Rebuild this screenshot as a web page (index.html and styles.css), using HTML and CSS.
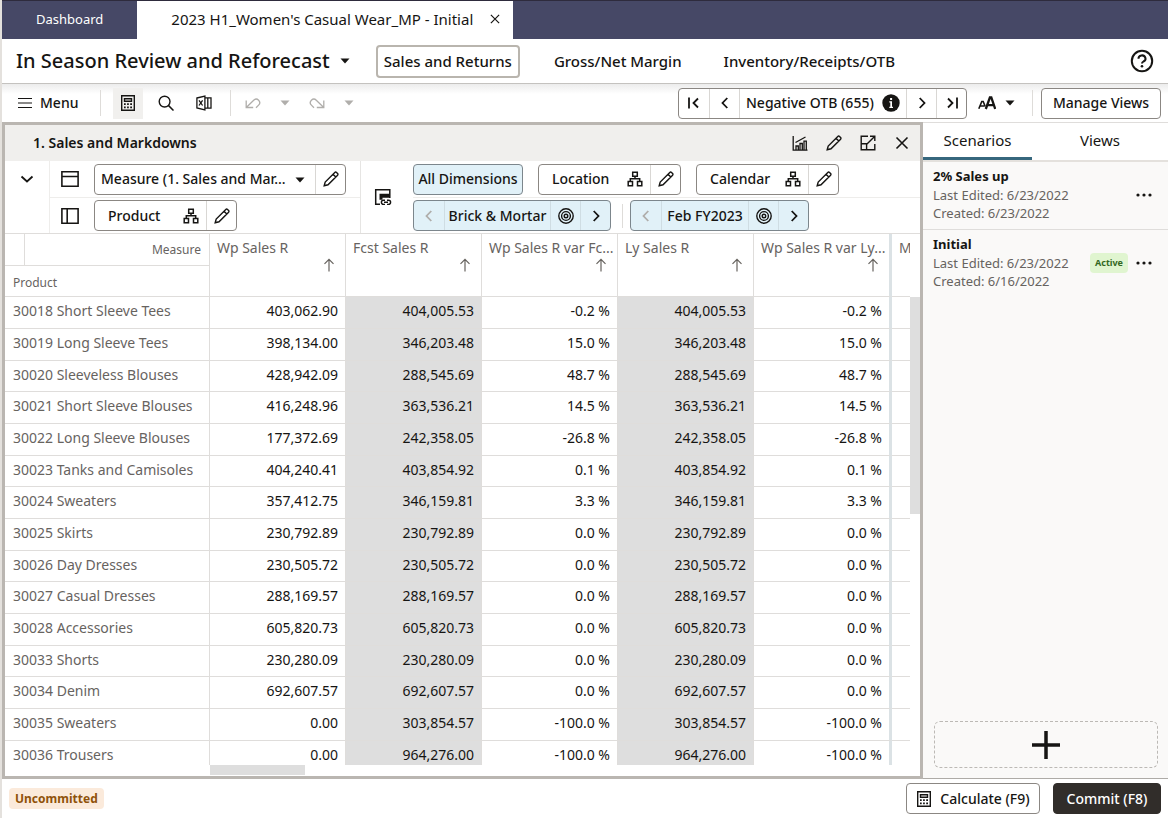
FILE: index.html
```html
<!DOCTYPE html>
<html lang="en">
<head>
<meta charset="utf-8">
<title>In Season Review and Reforecast</title>
<link rel="stylesheet" href="styles.css">
</head>
<body>
<svg class="sprite" aria-hidden="true">
  <symbol id="i-caret" viewBox="0 0 10 6"><path d="M0.5 0.5h9L5 5.5z" fill="currentColor"/></symbol>
  <symbol id="i-menu" viewBox="0 0 16 16"><path d="M1 3.5h14M1 8h14M1 12.5h14" fill="none" stroke="currentColor" stroke-width="1.2"/></symbol>
  <symbol id="i-calc" viewBox="0 0 16 16"><path d="M1.700.8h12.600v14.400H1.700zM4.500 3.700h7v2.600h-7z" fill="none" stroke="currentColor" stroke-width="1.400"/><path d="M4 8.300h1.700V10H4zM7.100 8.300h1.700V10H7.100zM10.200 8.300H12V10h-1.800zM4 11.500h1.700v1.700H4zM7.100 11.500h1.700v1.700H7.100zM10.200 11.500H12v1.700h-1.800z" fill="currentColor"/></symbol>
  <symbol id="i-search" viewBox="0 0 16 16"><circle cx="6.600" cy="6.600" r="5.400" fill="none" stroke="currentColor" stroke-width="1.400"/><path d="M10.600 10.600l4.900 4.900" stroke="currentColor" stroke-width="1.500"/></symbol>
  <symbol id="i-excel" viewBox="0 0 16 16"><path d="M.9 3l8-1.900v13.800L.9 13zM9 2.800h6v10.400H9M11.800 2.800v10.400M3 5.300l3.600 5.200M6.600 5.300L3 10.500" fill="none" stroke="currentColor" stroke-width="1.300"/></symbol>
  <symbol id="i-undo" viewBox="0 0 16 16"><path d="M1.200 5.500v7h7M1.500 12.200l7.200-7a3.400 3.400 0 0 1 4.900 4.900L11 12.800" fill="none" stroke="currentColor" stroke-width="1.300"/></symbol>
  <symbol id="i-redo" viewBox="0 0 16 16"><path d="M14.800 5.500v7h-7M14.500 12.200l-7.200-7a3.400 3.400 0 0 0-4.900 4.900L5 12.800" fill="none" stroke="currentColor" stroke-width="1.300"/></symbol>
  <symbol id="i-first" viewBox="0 0 16 16"><path d="M3 2.500v11M12 3.500L7.500 8l4.500 4.500" fill="none" stroke="currentColor" stroke-width="1.800"/></symbol>
  <symbol id="i-last" viewBox="0 0 16 16"><path d="M13 2.500v11M4 3.500L8.500 8 4 12.500" fill="none" stroke="currentColor" stroke-width="1.800"/></symbol>
  <symbol id="i-prev" viewBox="0 0 16 16"><path d="M10.300 3L5.500 8l4.800 5" fill="none" stroke="currentColor" stroke-width="1.800"/></symbol>
  <symbol id="i-next" viewBox="0 0 16 16"><path d="M5.700 3l4.800 5-4.800 5" fill="none" stroke="currentColor" stroke-width="1.800"/></symbol>
  <symbol id="i-down" viewBox="0 0 16 16"><path d="M2.500 5.500L8 10.500l5.500-5" fill="none" stroke="currentColor" stroke-width="1.800"/></symbol>
  <symbol id="i-info" viewBox="0 0 18 18"><circle cx="9" cy="9" r="8.700" fill="currentColor"/><path d="M8.100 4h2v2h-2zM7.300 7.300h2.700V12.700h1V14H7.300v-1.300h1V8.600h-1z" fill="#fff"/></symbol>
  <symbol id="i-font" viewBox="0 0 18 14"><path d="M7.800 13L11.900 1.500h1.400L17.200 13M9.500 9.200h6.500" fill="none" stroke="currentColor" stroke-width="2.300"/><path d="M.8 12.800L3.800 5.500h1.400l2 5M2.200 10h4" fill="none" stroke="currentColor" stroke-width="1.600"/></symbol>
  <symbol id="i-help" viewBox="0 0 24 24"><circle cx="12" cy="12" r="10.200" fill="none" stroke="currentColor" stroke-width="2"/><path d="M8.500 9.800a3.500 3.200 0 1 1 5 2.700c-1 .6-1.500 1-1.500 2" fill="none" stroke="currentColor" stroke-width="2"/><circle cx="12" cy="17.200" r="1.300" fill="currentColor"/></symbol>
  <symbol id="i-chart" viewBox="0 0 16 16"><path d="M1.200 1v14.200H15.500M4 15v-4h2.300v4M8 15V8.500h2.300V15M12 15V6.200h2.300V15M3.500 7.500L13.500 2" fill="none" stroke="currentColor" stroke-width="1.300"/></symbol>
  <symbol id="i-pencil" viewBox="0 0 16 16"><path d="M1.200 14.800l1-3.800L11.800 1.400a1.200 1.200 0 0 1 1.700 0l1.100 1.100a1.200 1.200 0 0 1 0 1.700L5 13.800zM10 3.200L12.800 6" fill="none" stroke="currentColor" stroke-width="1.400"/></symbol>
  <symbol id="i-expand" viewBox="0 0 16 16"><path d="M8 1.200H1.200v13.600h13.600V9M1.200 8.800h5.400v6M7 9l7.800-7.800M10 1.200h4.800V6" fill="none" stroke="currentColor" stroke-width="1.400"/></symbol>
  <symbol id="i-close" viewBox="0 0 16 16"><path d="M2.500 2.500l11 11M13.500 2.500l-11 11" fill="none" stroke="currentColor" stroke-width="1.600"/></symbol>
  <symbol id="i-rows" viewBox="0 0 16 16"><path d="M.8 1.500h14.400v13H.8zM.8 5.800h14.400" fill="none" stroke="currentColor" stroke-width="1.400"/></symbol>
  <symbol id="i-cols" viewBox="0 0 16 16"><path d="M.8 1.500h14.400v13H.8zM5.500 1.500v13" fill="none" stroke="currentColor" stroke-width="1.400"/></symbol>
  <symbol id="i-tree" viewBox="0 0 16 16"><path d="M5.700 1.200h4.600v4H5.700zM1.200 10.500h4.300v4.300H1.200zM10.500 10.500h4.300v4.300h-4.300zM8 5.200v2.600M3.300 10.500V7.800h9.400v2.700" fill="none" stroke="currentColor" stroke-width="1.500"/></symbol>
  <symbol id="i-link" viewBox="0 0 18 18"><path d="M15.800 10V1.700H1.700v14.600H6" fill="none" stroke="currentColor" stroke-width="1.500"/><path d="M5.500 5.800H16v4H8.500v2h-3z" fill="currentColor"/><path d="M11 12.200H9.500a2.100 2.100 0 0 0 0 4.200H11M13 12.200h1.500a2.100 2.100 0 0 1 0 4.200H13M10 14.300h4" fill="none" stroke="currentColor" stroke-width="1.400"/></symbol>
  <symbol id="i-target" viewBox="0 0 18 18"><g fill="none" stroke="currentColor" stroke-width="1.400"><circle cx="9" cy="9" r="7.200"/><circle cx="9" cy="9" r="4.400"/></g><circle cx="9" cy="9" r="1.800" fill="none" stroke="currentColor" stroke-width="1.400"/></symbol>
  <symbol id="i-up" viewBox="0 0 12 14"><path d="M6 13.500V1.500M1.500 5.800L6 1.300l4.500 4.500" fill="none" stroke="currentColor" stroke-width="1.200"/></symbol>
  <symbol id="i-dots" viewBox="0 0 16 4"><circle cx="2" cy="2" r="1.600" fill="currentColor"/><circle cx="8" cy="2" r="1.600" fill="currentColor"/><circle cx="14" cy="2" r="1.600" fill="currentColor"/></symbol>
  <symbol id="i-plus" viewBox="0 0 28 28"><path d="M14 0v28M0 14h28" stroke="currentColor" stroke-width="3.500"/></symbol>
</svg>
<div class="app">
  <nav class="tabbar" aria-label="Open tabs">
    <button class="doc-tab">Dashboard</button>
    <div class="doc-tab doc-tab-active"><span>2023 H1_Women's Casual Wear_MP - Initial</span><button class="tab-close" aria-label="Close tab"><svg class="ic12"><use href="#i-close"/></svg></button></div>
  </nav>
  <header class="header">
    <h1 class="title">In Season Review and Reforecast</h1>
    <button class="plain title-caret" aria-label="Switch step"><svg class="caret"><use href="#i-caret"/></svg></button>
    <nav class="steps" aria-label="Steps">
      <a class="step step-active" href="#">Sales and Returns</a>
      <a class="step" href="#">Gross/Net Margin</a>
      <a class="step" href="#">Inventory/Receipts/OTB</a>
    </nav>
    <button class="plain push" aria-label="Help"><svg class="ic24"><use href="#i-help"/></svg></button>
  </header>
  <div class="toolbar">
    <button class="plain menu-btn"><svg class="ic16"><use href="#i-menu"/></svg>Menu</button>
    <span class="sep"></span>
    <button class="tool tool-on" aria-label="Calculator"><svg class="ic16"><use href="#i-calc"/></svg></button>
    <button class="tool" aria-label="Search"><svg class="ic16"><use href="#i-search"/></svg></button>
    <button class="tool" aria-label="Export to Excel"><svg class="ic16"><use href="#i-excel"/></svg></button>
    <span class="sep"></span>
    <div class="history">
      <button class="plain" disabled aria-label="Undo"><svg class="ic16"><use href="#i-undo"/></svg></button>
      <button class="plain" disabled aria-label="Undo list"><svg class="caret"><use href="#i-caret"/></svg></button>
      <button class="plain" disabled aria-label="Redo"><svg class="ic16"><use href="#i-redo"/></svg></button>
      <button class="plain" disabled aria-label="Redo list"><svg class="caret"><use href="#i-caret"/></svg></button>
    </div>
    <div class="group pager push">
      <button class="cell" aria-label="First"><svg class="ic16"><use href="#i-first"/></svg></button>
      <button class="cell" aria-label="Previous"><svg class="ic16"><use href="#i-prev"/></svg></button>
      <span class="cell cell-label alert-label">Negative OTB (655)<svg class="ic18"><use href="#i-info"/></svg></span>
      <button class="cell" aria-label="Next"><svg class="ic16"><use href="#i-next"/></svg></button>
      <button class="cell" aria-label="Last"><svg class="ic16"><use href="#i-last"/></svg></button>
    </div>
    <button class="plain font-btn" aria-label="Text size"><svg class="ic-font"><use href="#i-font"/></svg><svg class="caret"><use href="#i-caret"/></svg></button>
    <span class="sep sep-short"></span>
    <button class="btn manage">Manage Views</button>
  </div>
  <main class="main">
    <section class="panel">
      <div class="panel-head">
        <h2 class="panel-title">1. Sales and Markdowns</h2>
        <button class="plain" aria-label="Chart"><svg class="ic16"><use href="#i-chart"/></svg></button>
        <button class="plain" aria-label="Edit"><svg class="ic16"><use href="#i-pencil"/></svg></button>
        <button class="plain" aria-label="Expand"><svg class="ic16"><use href="#i-expand"/></svg></button>
        <button class="plain" aria-label="Close"><svg class="ic16"><use href="#i-close"/></svg></button>
      </div>
      <div class="axes">
        <button class="plain axes-toggle" aria-label="Collapse"><svg class="ic16"><use href="#i-down"/></svg></button>
        <div class="axes-left">
          <div class="axis-row">
            <svg class="ic18 axis-icon"><use href="#i-rows"/></svg>
            <div class="group measure">
              <label class="measure-pick"><select aria-label="Measure profile"><option>Measure (1. Sales and Mar...</option></select><svg class="caret"><use href="#i-caret"/></svg></label>
              <button class="cell" aria-label="Edit measure"><svg class="ic16"><use href="#i-pencil"/></svg></button>
            </div>
          </div>
          <div class="axis-row">
            <svg class="ic18 axis-icon"><use href="#i-cols"/></svg>
            <div class="group dim">
              <button class="dim-name">Product<svg class="ic16"><use href="#i-tree"/></svg></button>
              <button class="cell" aria-label="Edit product"><svg class="ic16"><use href="#i-pencil"/></svg></button>
            </div>
          </div>
        </div>
        <div class="axes-link"><svg class="ic18"><use href="#i-link"/></svg></div>
        <div class="axes-right">
          <div class="axis-row pages">
            <button class="btn all-dims">All Dimensions</button>
            <div class="group dim">
              <button class="dim-name">Location<svg class="ic16"><use href="#i-tree"/></svg></button>
              <button class="cell" aria-label="Edit location"><svg class="ic16"><use href="#i-pencil"/></svg></button>
            </div>
            <div class="group dim">
              <button class="dim-name">Calendar<svg class="ic16"><use href="#i-tree"/></svg></button>
              <button class="cell" aria-label="Edit calendar"><svg class="ic16"><use href="#i-pencil"/></svg></button>
            </div>
          </div>
          <div class="axis-row">
            <div class="group tinted slice-wide">
              <button class="cell" disabled aria-label="Previous location"><svg class="ic16"><use href="#i-prev"/></svg></button>
              <span class="cell cell-label">Brick &amp; Mortar</span>
              <button class="cell" aria-label="Locate"><svg class="ic18"><use href="#i-target"/></svg></button>
              <button class="cell" aria-label="Next location"><svg class="ic16"><use href="#i-next"/></svg></button>
            </div>
            <span class="slice-sep"></span>
            <div class="group tinted slice">
              <button class="cell" disabled aria-label="Previous period"><svg class="ic16"><use href="#i-prev"/></svg></button>
              <span class="cell cell-label">Feb FY2023</span>
              <button class="cell" aria-label="Locate"><svg class="ic18"><use href="#i-target"/></svg></button>
              <button class="cell" aria-label="Next period"><svg class="ic16"><use href="#i-next"/></svg></button>
            </div>
          </div>
        </div>
      </div>
      <div class="grid">
        <div class="grid-view">
          <table class="pivot">
            <colgroup><col class="c-name"><col class="c-num"><col class="c-num"><col class="c-num"><col class="c-num"><col class="c-edge"><col></colgroup>
            <thead>
              <tr>
                <th class="corner"><div class="corner-top">Measure</div><div class="corner-bottom">Product</div></th>
                <th>Wp Sales R<svg class="sort"><use href="#i-up"/></svg></th>
                <th>Fcst Sales R<svg class="sort"><use href="#i-up"/></svg></th>
                <th>Wp Sales R var Fc...<svg class="sort"><use href="#i-up"/></svg></th>
                <th>Ly Sales R<svg class="sort"><use href="#i-up"/></svg></th>
                <th class="edge">Wp Sales R var Ly...<svg class="sort"><use href="#i-up"/></svg></th>
                <th>M</th>
              </tr>
            </thead>
            <tbody>
              <tr><th>30018 Short Sleeve Tees</th><td>403,062.90</td><td class="ro">404,005.53</td><td>-0.2 %</td><td class="ro">404,005.53</td><td class="edge">-0.2 %</td><td></td></tr>
              <tr><th>30019 Long Sleeve Tees</th><td>398,134.00</td><td class="ro">346,203.48</td><td>15.0 %</td><td class="ro">346,203.48</td><td class="edge">15.0 %</td><td></td></tr>
              <tr><th>30020 Sleeveless Blouses</th><td>428,942.09</td><td class="ro">288,545.69</td><td>48.7 %</td><td class="ro">288,545.69</td><td class="edge">48.7 %</td><td></td></tr>
              <tr><th>30021 Short Sleeve Blouses</th><td>416,248.96</td><td class="ro">363,536.21</td><td>14.5 %</td><td class="ro">363,536.21</td><td class="edge">14.5 %</td><td></td></tr>
              <tr><th>30022 Long Sleeve Blouses</th><td>177,372.69</td><td class="ro">242,358.05</td><td>-26.8 %</td><td class="ro">242,358.05</td><td class="edge">-26.8 %</td><td></td></tr>
              <tr><th>30023 Tanks and Camisoles</th><td>404,240.41</td><td class="ro">403,854.92</td><td>0.1 %</td><td class="ro">403,854.92</td><td class="edge">0.1 %</td><td></td></tr>
              <tr><th>30024 Sweaters</th><td>357,412.75</td><td class="ro">346,159.81</td><td>3.3 %</td><td class="ro">346,159.81</td><td class="edge">3.3 %</td><td></td></tr>
              <tr><th>30025 Skirts</th><td>230,792.89</td><td class="ro">230,792.89</td><td>0.0 %</td><td class="ro">230,792.89</td><td class="edge">0.0 %</td><td></td></tr>
              <tr><th>30026 Day Dresses</th><td>230,505.72</td><td class="ro">230,505.72</td><td>0.0 %</td><td class="ro">230,505.72</td><td class="edge">0.0 %</td><td></td></tr>
              <tr><th>30027 Casual Dresses</th><td>288,169.57</td><td class="ro">288,169.57</td><td>0.0 %</td><td class="ro">288,169.57</td><td class="edge">0.0 %</td><td></td></tr>
              <tr><th>30028 Accessories</th><td>605,820.73</td><td class="ro">605,820.73</td><td>0.0 %</td><td class="ro">605,820.73</td><td class="edge">0.0 %</td><td></td></tr>
              <tr><th>30033 Shorts</th><td>230,280.09</td><td class="ro">230,280.09</td><td>0.0 %</td><td class="ro">230,280.09</td><td class="edge">0.0 %</td><td></td></tr>
              <tr><th>30034 Denim</th><td>692,607.57</td><td class="ro">692,607.57</td><td>0.0 %</td><td class="ro">692,607.57</td><td class="edge">0.0 %</td><td></td></tr>
              <tr><th>30035 Sweaters</th><td>0.00</td><td class="ro">303,854.57</td><td>-100.0 %</td><td class="ro">303,854.57</td><td class="edge">-100.0 %</td><td></td></tr>
              <tr><th>30036 Trousers</th><td>0.00</td><td class="ro">964,276.00</td><td>-100.0 %</td><td class="ro">964,276.00</td><td class="edge">-100.0 %</td><td></td></tr>
            </tbody>
          </table>
        </div>
        <div class="vscroll"><div class="vthumb"></div></div>
        <div class="hscroll"><div class="hthumb"></div></div>
      </div>
    </section>
    <aside class="side">
      <div class="side-tabs">
        <button class="side-tab side-tab-active">Scenarios</button>
        <button class="side-tab">Views</button>
      </div>
      <article class="scenario">
        <div class="scenario-text"><h3>2% Sales up</h3><p>Last Edited: 6/23/2022</p><p>Created: 6/23/2022</p></div>
        <button class="plain" aria-label="Actions"><svg class="dots"><use href="#i-dots"/></svg></button>
      </article>
      <article class="scenario">
        <div class="scenario-text"><h3>Initial</h3><p>Last Edited: 6/23/2022</p><p>Created: 6/16/2022</p></div>
        <span class="active-badge">Active</span>
        <button class="plain" aria-label="Actions"><svg class="dots"><use href="#i-dots"/></svg></button>
      </article>
      <button class="add" aria-label="Add scenario"><svg class="ic28"><use href="#i-plus"/></svg></button>
    </aside>
  </main>
  <footer class="footer">
    <span class="status">Uncommitted</span>
    <button class="btn calc push"><svg class="ic16"><use href="#i-calc"/></svg>Calculate (F9)</button>
    <button class="btn commit">Commit (F8)</button>
  </footer>
</div>
</body>
</html>
```
FILE: styles.css
```css
* { box-sizing: border-box; }
body {
  margin: 0;
  background: #e4e1dd;
  color: #161513;
  font: 14px/20px "Noto Sans", "Open Sans", sans-serif;
}
h1, h2, h3, p { margin: 0; }
button, select { font: inherit; color: inherit; }
button { cursor: pointer; }
svg { display: block; flex: none; }
.sprite { position: absolute; width: 0; height: 0; }
.ic12 { width: 12px; height: 12px; }
.ic16 { width: 16px; height: 16px; }
.ic18 { width: 18px; height: 18px; }
.ic24 { width: 24px; height: 24px; }
.ic28 { width: 28px; height: 28px; }
.ic-font { width: 18px; height: 14px; }
.caret { width: 10px; height: 6px; }
.push { margin-left: auto; }
.app {
  display: flex;
  flex-direction: column;
  height: 100vh;
  margin-left: 2px;
  background: #fff;
}
.plain {
  display: flex;
  align-items: center;
  padding: 0;
  border: 0;
  background: none;
}

.tabbar {
  display: flex;
  flex: none;
  height: 39px;
  border-top: 1px solid #2e2b3d;
  background: #464866;
}
.doc-tab {
  display: flex;
  align-items: center;
  padding: 0 34px 3px;
  border: 0;
  background: none;
  color: #fff;
  font-size: 13px;
}
.doc-tab-active {
  gap: 16px;
  padding: 0 12px 3px 34px;
  background: #fff;
  color: #161513;
  font-size: 15px;
}
.tab-close { padding: 0; border: 0; background: none; }

.header {
  display: flex;
  flex: none;
  align-items: center;
  height: 45px;
  padding: 0 14px;
  border-bottom: 1px solid #c4c2bf;
}
.title { font-size: 20px; line-height: 24px; font-weight: 500; }
.title-caret { margin: 0 26px 0 10px; }
.steps { display: flex; gap: 26px; }
.step {
  display: flex;
  align-items: center;
  height: 33px;
  padding: 0 6px;
  border: 2px solid transparent;
  border-radius: 4px;
  color: #161513;
  font-size: 15px;
  font-weight: 500;
  text-decoration: none;
}
.step-active { border-color: #b9b5ae; }

.toolbar {
  display: flex;
  flex: none;
  align-items: center;
  height: 38px;
  padding: 0 7px 0 15px;
  background: linear-gradient(#ececec, #fff 10px);
}
.menu-btn { gap: 7px; width: 83px; font-weight: 500; }
.sep { width: 1px; height: 26px; background: #dedcd9; }
.sep-short { margin-left: 17px; }
.tool {
  display: flex;
  align-items: center;
  justify-content: center;
  width: 30px;
  height: 31px;
  margin-left: 8px;
  padding: 0;
  border: 0;
  background: none;
}
.tool-on { margin-left: 12px; background: #f1f0ee; }
.tool + .sep { margin-left: 11px; }
.history { display: flex; gap: 19px; margin-left: 14px; }
.history .plain, .group .cell:disabled { color: #b0aeab; cursor: default; }

.group {
  display: flex;
  height: 31px;
  overflow: hidden;
  border: 1px solid #8b8783;
  border-radius: 4px;
  background: #fff;
  font-weight: 500;
}
.cell {
  display: flex;
  flex: none;
  align-items: center;
  justify-content: center;
  width: 30px;
  padding: 0;
  border: 0;
  border-left: 1px solid #d9d7d4;
  background: none;
}
.cell:first-child { border-left: 0; }
.cell-label { flex: 1; width: auto; white-space: nowrap; }
.pager { width: 289px; }
.alert-label { justify-content: space-between; padding: 0 6px; }
.font-btn { gap: 9px; margin-left: 11px; }
.btn {
  display: flex;
  align-items: center;
  justify-content: center;
  height: 31px;
  padding: 0;
  border: 1px solid #8b8783;
  border-radius: 4px;
  background: #fff;
  font-weight: 500;
  white-space: nowrap;
}
.manage { width: 120px; margin-left: 8px; }

.main { display: flex; flex: 1; min-height: 0; }
.panel {
  display: flex;
  flex: 1;
  flex-direction: column;
  min-width: 0;
  border: 3px solid #bab6b1;
}
.panel-head {
  display: flex;
  flex: none;
  align-items: center;
  gap: 18px;
  height: 36px;
  padding: 0 10px 0 28px;
  background: #f0efed;
}
.panel-title { flex: 1; font-size: 14px; line-height: 20px; font-weight: 600; }

.axes { display: flex; flex: none; height: 73px; border-bottom: 1px solid #dfdddb; }
.axes-toggle {
  align-items: flex-start;
  justify-content: center;
  width: 45px;
  padding: 10px 0 0;
  border-right: 1px solid #eeedeb;
}
.axes-left { width: 311px; border-right: 1px solid #e6e5e3; }
.axis-row { display: flex; align-items: center; height: 36px; }
.axis-row + .axis-row { border-top: 1px solid #eeedeb; }
.axis-icon { margin: 0 15px 0 11px; }
.axes-link { display: flex; align-items: center; padding: 0 21px 0 13px; }
.axes-right { flex: 1; }
.pages { gap: 15px; }
.measure { width: 252px; }
.measure-pick { position: relative; display: flex; flex: 1; }
.measure-pick select {
  flex: 1;
  width: 100%;
  padding: 0 24px 0 6px;
  border: 0;
  background: none;
  appearance: none;
}
.measure-pick .caret { position: absolute; top: 12px; right: 10px; pointer-events: none; }
.dim { width: 143px; }
.dim-name {
  display: flex;
  flex: 1;
  align-items: center;
  justify-content: space-between;
  padding: 0 7px 0 13px;
  border: 0;
  background: none;
}
.all-dims { width: 110px; background: #e1f1f8; border-color: #7c868c; }
.tinted { background: #e1f1f8; border-color: #7c868c; }
.tinted .cell { border-color: #cfdde3; }
.slice-wide { width: 198px; }
.slice { width: 179px; }
.slice-sep { width: 1px; height: 24px; margin: 0 7px 0 11px; background: #dedcd9; }

.grid {
  display: grid;
  flex: 1;
  grid-template: minmax(0, 1fr) 11px / minmax(0, 1fr) 10px;
  min-height: 0;
}
.grid-view { overflow: hidden; }
.pivot {
  width: 100%;
  border-collapse: separate;
  border-spacing: 0;
  table-layout: fixed;
}
.c-name { width: 205px; }
.c-num { width: 136px; }
.c-edge { width: 138px; }
.pivot th, .pivot td {
  padding: 0 7px 3px;
  overflow: hidden;
  border-right: 1px solid #dfdddb;
  border-bottom: 1px solid #dfdddb;
  font-weight: 400;
  white-space: nowrap;
}
.pivot th { padding-left: 8px; color: #67635f; text-align: left; }
.pivot td { text-align: right; }
.pivot tbody tr { height: 32px; }
.pivot tbody tr:nth-child(3n) { height: 31px; }
.pivot thead th { height: 63px; padding: 4px 7px 0; vertical-align: top; }
.pivot thead .corner { padding: 0; font-size: 12px; }
.corner-top {
  height: 31px;
  margin-left: 19px;
  padding: 6px 8px 0 0;
  border-left: 1px solid #dfdddb;
  text-align: right;
}
.corner-bottom { height: 31px; padding: 7px 8px 0; border-top: 1px solid #dfdddb; }
.pivot .ro { background: #dedede; }
.pivot .edge { border-right: 3px solid #dbe2e5; }
.pivot th:last-child, .pivot td:last-child { border-right: 0; }
.sort { width: 12px; height: 14px; margin: 0 3px 0 auto; }
.vscroll { padding-top: 63px; }
.vthumb { height: 217px; background: #dedede; }
.hscroll { padding-left: 205px; }
.hthumb { width: 95px; height: 10px; background: #dedede; }

.side {
  display: flex;
  flex: none;
  flex-direction: column;
  width: 245px;
  border-top: 1px solid #dfdddb;
  border-bottom: 1px solid #aeaba7;
  background: #faf9f8;
}
.side-tabs {
  display: flex;
  flex: none;
  height: 39px;
  border-bottom: 2px solid #e4e1dd;
  background: #fff;
}
.side-tab {
  width: 109px;
  padding: 0;
  border: 0;
  border-bottom: 3px solid transparent;
  background: none;
  font-size: 15px;
}
.side-tab + .side-tab { flex: 1; }
.side-tab-active { border-color: #36677d; }
.scenario {
  display: flex;
  align-items: center;
  padding: 5px 16px 7px 10px;
}
.scenario + .scenario { border-top: 1px solid #dfdddb; }
.scenario-text { flex: 1; }
.scenario h3 { font-size: 13px; line-height: 19px; font-weight: 700; }
.scenario p { color: #67635f; font-size: 13px; line-height: 18px; }
.dots { width: 16px; height: 4px; }
.active-badge {
  margin-right: 8px;
  padding: 0 5px;
  border-radius: 4px;
  background: #e0f5d0;
  color: #33681f;
  font-size: 9px;
  line-height: 20px;
  font-weight: 700;
}
.add {
  display: flex;
  align-items: center;
  justify-content: center;
  height: 47px;
  margin: auto 10px 10px 11px;
  border: 1px dashed #bcb9b5;
  border-radius: 6px;
  background: none;
}

.footer {
  display: flex;
  flex: none;
  align-items: center;
  height: 39px;
  padding: 0 7px;
}
.status {
  padding: 0 6px;
  border-radius: 4px;
  background: #fbeadb;
  color: #8f520a;
  font-size: 12px;
  line-height: 21px;
  font-weight: 700;
}
.calc { gap: 8px; width: 134px; margin-right: 13px; }
.commit { width: 108px; border-color: #312d2a; background: #312d2a; color: #fff; }
```
